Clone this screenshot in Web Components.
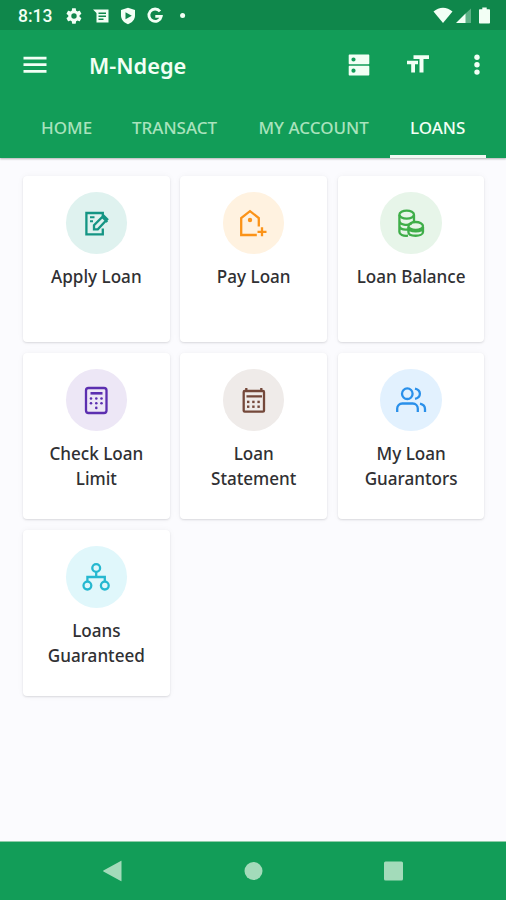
<!DOCTYPE html>
<html lang="en">
<head>
<meta charset="utf-8">
<meta name="viewport" content="width=device-width, initial-scale=1">
<title>M-Ndege</title>
<style>
    body {
        margin: 0;
        font-family: "Noto Sans", "Open Sans", sans-serif;
    }
</style>
</head>
<body>
<mobile-app></mobile-app>

<script>
// Icons of the loan tiles, all on a 32x32 grid
const TILE_ICONS = {
    apply: `
        <path d="M22.8 9V6H6.4v21.4h16.4v-6"/>
        <path d="M10 10.2h4.5M10 14.3h3" stroke-width="2"/>
        <path d="M14 22.3v-4L23.6 8.7l3.6 3.6-9.4 10zM21.8 9.5l5.5 5.5"/>`,
    pay: `
        <path d="M20.8 19.5V11L12 4.2 3.2 11v17h15.6"/>
        <path d="M24 20.3v9M19.5 24.8h9"/>
        <circle cx="12" cy="13" r="2.2" fill="currentColor" stroke="none"/>`,
    balance: `
        <ellipse cx="11.7" cy="7.6" rx="7.3" ry="4"/>
        <path d="M4.4 8v17c0 2.5 3.5 4.2 8.6 3.7M19 8v6M4.4 13.5c0 4.5 8 5.5 12 3M4.4 19.2c.5 2.6 4 3.7 8.6 3.3"/>
        <path d="M13.4 20v5c0 5 14.6 5 14.6 0v-5M13.4 21c1 4.6 13.6 4.6 14.6 0"/>
        <ellipse cx="20.7" cy="19" rx="7.3" ry="4"/>`,
    limit: `
        <rect x="6" y="4" width="20.5" height="25" rx="2.5"/>
        <path d="M10.5 9.3h12" stroke-width="2.6"/>
        <g fill="currentColor" stroke="none">
            <circle cx="11" cy="14.5" r="1.3"/><circle cx="16.3" cy="14.5" r="1.3"/><circle cx="21.5" cy="14.5" r="1.3"/>
            <circle cx="11" cy="19.2" r="1.3"/><circle cx="16.3" cy="19.2" r="1.3"/><circle cx="21.5" cy="19.2" r="1.3"/>
            <circle cx="16.3" cy="23.9" r="1.3"/>
        </g>`,
    statement: `
        <rect x="5.7" y="7" width="20.3" height="20.7" rx="1"/>
        <path d="M8.3 4v3M23.3 4v3M8.5 12.4H24"/>
        <g fill="currentColor" stroke="none">
            <rect x="9" y="16.7" width="2.4" height="2.4"/><rect x="14.2" y="16.7" width="2.4" height="2.4"/><rect x="19.4" y="16.7" width="2.4" height="2.4"/>
            <rect x="9" y="21.5" width="2.4" height="2.4"/><rect x="14.2" y="21.5" width="2.4" height="2.4"/><rect x="19.4" y="21.5" width="2.4" height="2.4"/>
        </g>`,
    guarantors: `
        <circle cx="12.3" cy="9.7" r="5.3"/>
        <path d="M2.2 28v-3.5a5 5 0 0 1 5-5h10.6a5 5 0 0 1 5 5V28M20 4.6c6.5 1.6 6.5 8.8 0 10.3M25 19.7c3.3.8 5 3 5 5.3v3"/>`,
    guaranteed: `
        <circle cx="16.2" cy="7" r="3.9"/>
        <circle cx="7.4" cy="24.6" r="3.9"/>
        <circle cx="24.8" cy="24.6" r="3.9"/>
        <path d="M16.2 11v5M7.4 20.5V16h17.4v4.5"/>`
};

const define = (name, markup) => {
    customElements.define(name, class extends HTMLElement {
        constructor() {
            super();
            this.attachShadow({ mode: 'open' }).innerHTML = markup;
        }
    });
};

// =============================================
// Status bar
// =============================================

define('status-bar', `
    <style>
        :host {
            display: flex;
            align-items: center;
            justify-content: space-between;
            box-sizing: border-box;
            height: 30px;
            padding: 1px 16px 0 18px;
            background: #0f874b;
            color: #f2fff5;
        }
        .group { display: flex; align-items: center; }
        .time { font: 500 17.5px/20px Roboto, sans-serif; width: 47px; }
        svg { display: block; fill: currentColor; }
        .left { gap: 9px; }
        .right { gap: 3px; }
        .battery { margin-left: 5px; }
    </style>
    <div class="group">
        <span class="time">8:13</span>
        <div class="group left">
            <svg width="18" height="18" viewBox="0 0 24 24"><path d="M19.4 13c.1-.7.1-1.3 0-2l2.2-1.7c.2-.2.3-.5.1-.7l-2-3.5c-.1-.2-.4-.3-.6-.2l-2.6 1c-.5-.4-1.1-.7-1.7-1l-.4-2.7c0-.2-.2-.4-.5-.4h-4c-.3 0-.5.2-.5.4L9 4.900c-.6.3-1.200.6-1.700 1l-2.600-1c-.2-.1-.5 0-.6.2l-2 3.500c-.1.2-.1.500.1.700L4.400 11c-.1.700-.1 1.300 0 2l-2.200 1.700c-.2.2-.2.500-.1.700l2 3.500c.1.200.4.300.6.200l2.600-1c.5.400 1.100.7 1.700 1l.4 2.700c0 .2.200.4.500.4h4c.3 0 .5-.2.5-.4l.4-2.700c.6-.3 1.200-.6 1.700-1l2.600 1c.2.100.5 0 .6-.2l2-3.500c.1-.2.100-.5-.1-.7zM12 15.600a3.600 3.600 0 1 1 0-7.200 3.600 3.600 0 0 1 0 7.200z"/></svg>
            <svg width="18" height="18" viewBox="0 0 18 18"><path fill-rule="evenodd" d="M1 2.5h15.5v13h-12V6zM6.5 5.5V7H14V5.5zm0 3V10H14V8.500zm0 3V13h5v-1.500z"/></svg>
            <svg width="18" height="18" viewBox="0 0 18 18"><path fill-rule="evenodd" d="M9 .8 16 3v5.5c0 4-3 7.300-7 8.700-4-1.400-7-4.700-7-8.700V3zM6.500 5.200v7L12.800 8.700z"/></svg>
            <svg width="18" height="18" viewBox="0 0 18 18"><path fill="none" stroke="currentColor" stroke-width="2.8" d="M14 4.4A6.2 6.2 0 1 0 15.2 9.4H9.3"/></svg>
            <svg width="18" height="18" viewBox="0 0 18 18"><circle cx="9.6" cy="8.5" r="2.5"/></svg>
        </div>
    </div>
    <div class="group right">
        <svg width="20" height="18" viewBox="0 0 20 18"><path d="M.5 4.6C6-.6 14-.6 19.5 4.6L10 16z"/></svg>
        <svg width="15" height="18" viewBox="0 0 15 18"><path opacity=".35" d="M15 1.5V16H9V7z"/><path d="M0 16 9.5 6.5V16z"/></svg>
        <svg class="battery" width="11" height="18" viewBox="0 0 11 18"><path d="M3.3.6h4.4v1.7H10c.6 0 1 .4 1 1v12.3c0 .6-.4 1-1 1H1c-.6 0-1-.4-1-1V3.3c0-.6.4-1 1-1h2.3z"/></svg>
    </div>
`);

// =============================================
// App bar
// =============================================

define('app-bar', `
    <style>
        :host {
            display: flex;
            align-items: center;
            box-sizing: border-box;
            height: 70px;
            padding: 0 25px 0 23px;
            color: #f2fff5;
        }
        svg { display: block; fill: currentColor; }
        .title {
            flex: 1;
            margin-left: 42px;
            padding-top: 2px;
            font-size: 21.8px;
            font-weight: 600;
            line-height: 30px;
        }
        .actions { display: flex; align-items: center; gap: 36px; }
        .more { margin-left: 7px; }
    </style>
    <svg width="24" height="24" viewBox="0 0 24 24"><path d="M.5 3.7h23v2.8H.5zm0 6.6h23v2.8H.5zm0 6.7h23v2.8H.5z"/></svg>
    <div class="title"><slot></slot></div>
    <div class="actions">
        <svg width="22" height="22" viewBox="0 0 22 22"><path fill-rule="evenodd" d="M1.7.5h18.6c.6 0 1 .4 1 1v7.7c0 .6-.4 1-1 1H1.7c-.6 0-1-.4-1-1V1.5c0-.6.4-1 1-1zm0 11.3h18.6c.6 0 1 .4 1 1v7.7c0 .6-.4 1-1 1H1.7c-.6 0-1-.4-1-1v-7.7c0-.6.4-1 1-1zM5.500 3.400a2.100 2.100 0 1 0 0 4.200 2.100 2.100 0 0 0 0-4.200zm0 11.200a2.100 2.100 0 1 0 0 4.200 2.100 2.100 0 0 0 0-4.200z"/></svg>
        <svg width="24" height="22" viewBox="0 0 24 22"><path d="M7.5 1.2H23V5h-5.5v13.5h-4V5h-6zM1 6.8h11v3.4H9v8.3H5.2v-8.3H1z"/></svg>
        <svg class="more" width="8" height="24" viewBox="0 0 8 24"><circle cx="4" cy="4.3" r="2.7"/><circle cx="4" cy="11.7" r="2.7"/><circle cx="4" cy="19.1" r="2.7"/></svg>
    </div>
`);

// =============================================
// Tabs
// =============================================

define('tab-bar', `
    <style>
        :host {
            display: flex;
            box-sizing: border-box;
            height: 58px;
            padding-left: 21px;
        }
    </style>
    <slot></slot>
`);

define('tab-item', `
    <style>
        :host {
            display: block;
            box-sizing: border-box;
            padding: 15px 0 0 20px;
            width: var(--w);
            color: #a9e3bd;
            font-size: 17px;
            font-weight: 500;
            line-height: 26px;
            white-space: nowrap;
        }
        :host([active]) {
            color: #f2fff5;
            border-bottom: 3px solid #f1f8f3;
        }
    </style>
    <slot></slot>
`);

// =============================================
// Loan tiles
// =============================================

class LoanTile extends HTMLElement {
    constructor() {
        super();
        this.attachShadow({ mode: 'open' });
    }

    connectedCallback() {
        this.shadowRoot.innerHTML = `
            <style>
                :host {
                    display: flex;
                    flex-direction: column;
                    align-items: center;
                    box-sizing: border-box;
                    padding-top: 16.7px;
                    border-radius: 4px;
                    background: #fff;
                    box-shadow: 0 1px 2px rgba(40, 40, 60, .14), 0 0 7px rgba(40, 40, 60, .04);
                }
                .icon {
                    display: grid;
                    place-items: center;
                    width: 61.5px;
                    height: 61.5px;
                    border-radius: 50%;
                    background: var(--tint);
                    color: var(--ink);
                }
                svg {
                    width: 32px;
                    height: 32px;
                    fill: none;
                    stroke: currentColor;
                    stroke-width: 2.3;
                }
                .label {
                    margin-top: 10.5px;
                    color: #303033;
                    font-size: 17.1px;
                    font-weight: 500;
                    line-height: 25px;
                    text-align: center;
                }
            </style>
            <div class="icon"><svg viewBox="0 0 32 32">${TILE_ICONS[this.getAttribute('icon')]}</svg></div>
            <div class="label"><slot></slot></div>
        `;
    }
}

customElements.define('loan-tile', LoanTile);

// =============================================
// System navigation
// =============================================

define('nav-bar', `
    <style>
        :host {
            display: flex;
            align-items: center;
            justify-content: space-between;
            box-sizing: border-box;
            height: 59px;
            padding: 0 102px;
            border-top: 1px solid #8fcda9;
            background: #129d58;
            color: #a3dbba;
        }
        svg { display: block; fill: currentColor; }
    </style>
    <svg width="20" height="22" viewBox="0 0 20 22"><path d="M19.5 1.3v19.4c0 .5-.3.6-.7.4L1.4 11.4c-.4-.2-.4-.6 0-.8L18.8.9c.4-.2.7-.1.7.4z"/></svg>
    <svg width="20" height="20" viewBox="0 0 20 20"><circle cx="10.5" cy="10" r="9"/></svg>
    <svg width="20" height="20" viewBox="0 0 20 20"><rect x="0" y=".5" width="19" height="19" rx="1.5"/></svg>
`);

define('mobile-app', `
    <style>
        :host {
            display: flex;
            flex-direction: column;
            width: 506px;
            height: 900px;
            background: #fbfbfe;
        }
        header {
            background: #129d58;
            box-shadow: 0 1px 2px rgba(0, 0, 0, .3);
        }
        main {
            flex: 1;
            display: grid;
            grid-template-columns: repeat(3, 146.7px);
            grid-auto-rows: 166.3px;
            gap: 10.7px;
            align-content: start;
            padding: 17.7px 0 0 23px;
        }
    </style>
    <header>
        <status-bar></status-bar>
        <app-bar>M-Ndege</app-bar>
        <tab-bar>
            <tab-item style="--w:91px">HOME</tab-item>
            <tab-item style="--w:126.5px">TRANSACT</tab-item>
            <tab-item style="--w:151.5px">MY ACCOUNT</tab-item>
            <tab-item style="--w:96px" active>LOANS</tab-item>
        </tab-bar>
    </header>
    <main>
        <loan-tile icon="apply" style="--tint:#dff2ef;--ink:#159584">Apply Loan</loan-tile>
        <loan-tile icon="pay" style="--tint:#fff2e0;--ink:#fb9318">Pay Loan</loan-tile>
        <loan-tile icon="balance" style="--tint:#e7f5e9;--ink:#3fae49">Loan Balance</loan-tile>
        <loan-tile icon="limit" style="--tint:#ede7f6;--ink:#5c2fb0">Check Loan<br>Limit</loan-tile>
        <loan-tile icon="statement" style="--tint:#efebe9;--ink:#74483a">Loan<br>Statement</loan-tile>
        <loan-tile icon="guarantors" style="--tint:#e2f1fe;--ink:#2a90ea">My Loan<br>Guarantors</loan-tile>
        <loan-tile icon="guaranteed" style="--tint:#e0f7fb;--ink:#26b8d0">Loans<br>Guaranteed</loan-tile>
    </main>
    <nav-bar></nav-bar>
`);
</script>
</body>
</html>
